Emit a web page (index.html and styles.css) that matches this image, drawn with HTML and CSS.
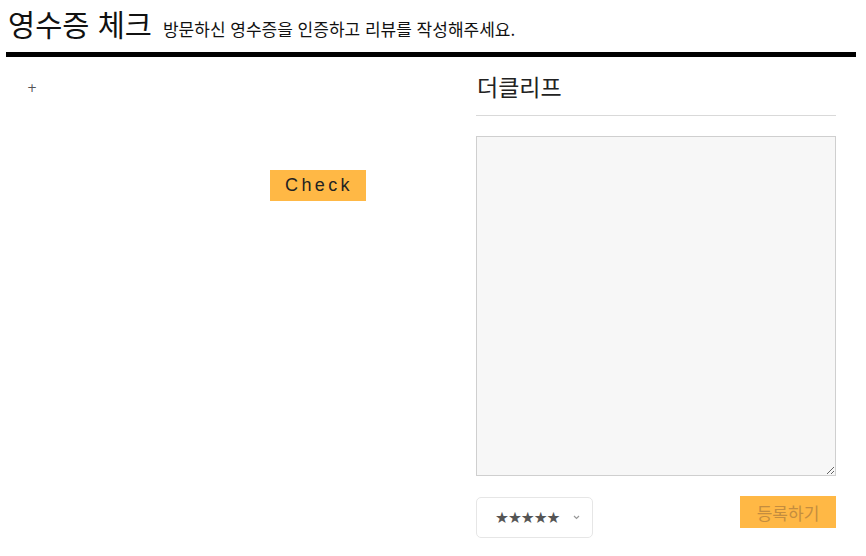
FILE: index.html
```html
<!DOCTYPE html>
<html lang="ko">
<head>
<meta charset="utf-8">
<link rel="stylesheet" href="styles.css">
</head>
<body>
<div class="page">
  <header class="header">
    <h1 class="title">영수증 체크</h1>
    <p class="subtitle">방문하신 영수증을 인증하고 리뷰를 작성해주세요.</p>
  </header>
  <div class="rule"></div>
  <main class="main">
    <section class="left">
      <div class="plus">+</div>
      <div class="check-row">
        <button class="check-btn">Check</button>
      </div>
    </section>
    <section class="right">
      <h2 class="store">더클리프</h2>
      <div class="divider"></div>
      <textarea class="review"></textarea>
      <div class="actions">
        <div class="rating">
          <span class="stars">★★★★★</span>
          <svg class="chev" width="7" height="5" viewBox="0 0 7 5"><path d="M1 1 L3.5 3.5 L6 1" fill="none" stroke="#999" stroke-width="1.2"/></svg>
        </div>
        <button class="submit">등록하기</button>
      </div>
    </section>
  </main>
</div>
</body>
</html>
```

FILE: styles.css
```css
* { box-sizing: border-box; }
html, body { margin: 0; padding: 0; background: #fff; }
body { font-family: "Noto Sans CJK KR", "Noto Sans", sans-serif; color: #111; }
.page { width: 850px; margin-left: 6px; }
.header { display: flex; align-items: baseline; gap: 11px; padding: 3px 0 0 2px; height: 52px; }
.title { margin: 0; font-size: 29.5px; font-weight: 400; line-height: 40px; }
.subtitle { margin: 0; font-size: 17px; line-height: 20px; }
.rule { height: 5px; background: #000; }
.main { display: flex; }
.left { width: 470px; padding-top: 24px; }
.plus { font-family: "DejaVu Sans", sans-serif; font-size: 12px; color: #555; padding-left: 21px; line-height: 14px; }
.check-row { padding: 75px 0 0 264px; }
.check-btn { width: 96px; height: 31px; border: 0; background: #ffb845; font-family: "Liberation Sans", sans-serif; font-size: 18px; letter-spacing: 3.4px; color: #222; padding: 0 0 0 2px; }
.right { width: 360px; padding-top: 12px; }
.store { margin: 0; font-size: 23px; font-weight: 400; line-height: 34px; padding-left: 1px; color: #222; }
.divider { height: 1px; background: #d9d9d9; margin-top: 12px; }
.review { display: block; width: 360px; height: 340px; margin-top: 20px; background: #f7f7f7; border: 1px solid #cfcfcf; resize: both; }
.actions { display: flex; justify-content: space-between; align-items: flex-start; margin-top: 20px; }
.rating { width: 117px; height: 41px; margin-top: 1px; border: 1px solid #e6e6e6; border-radius: 5px; display: flex; align-items: center; padding-left: 18px; gap: 14px; }
.stars { font-family: "DejaVu Sans", sans-serif; font-size: 15.5px; color: #555; letter-spacing: -1px; }
.submit { width: 96px; height: 32px; border: 0; background: #ffb845; color: #c48d3f; font-family: "Noto Sans CJK KR", sans-serif; font-size: 17px; padding: 0; }
```
